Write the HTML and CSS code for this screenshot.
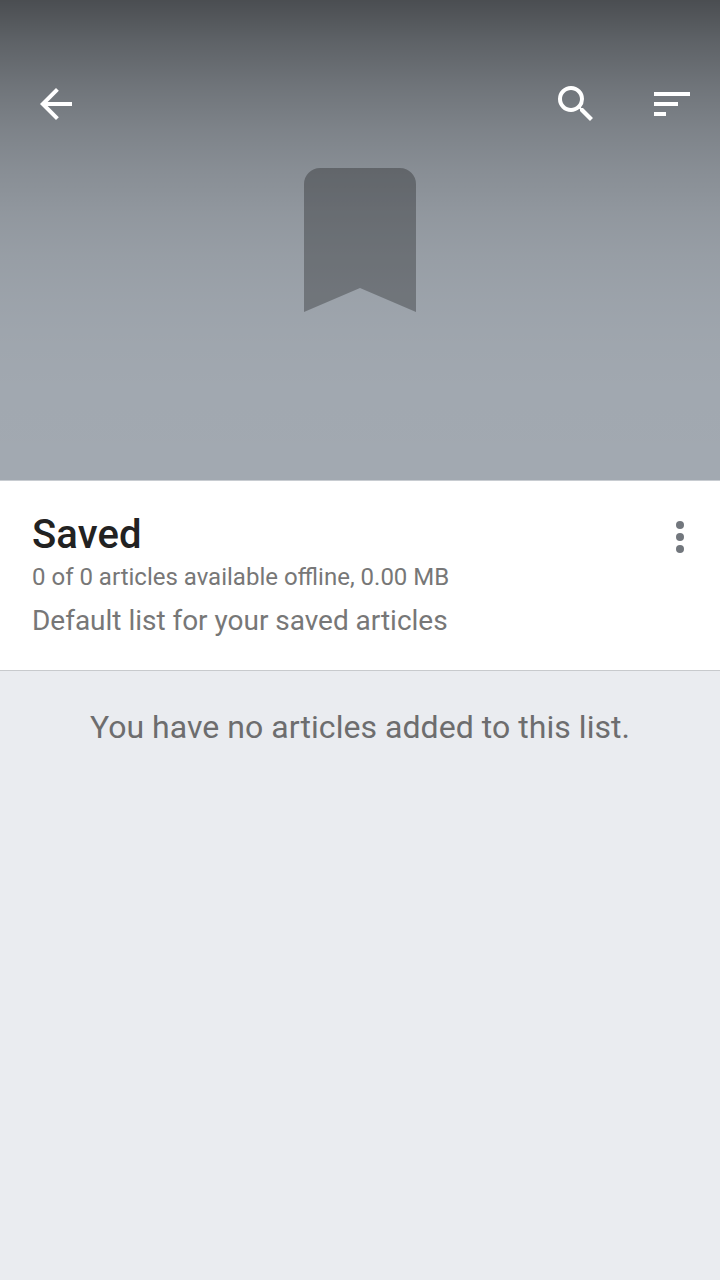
FILE: index.html
```html
<!DOCTYPE html>
<html lang="en">
<head>
<meta charset="utf-8">
<title>Saved</title>
<link rel="stylesheet" href="styles.css">
</head>
<body>
<header class="hero">
  <nav class="toolbar">
    <button class="icon-button" aria-label="Back"><svg viewBox="0 0 24 24"><path d="M20 11H7.83l5.59-5.59L12 4l-8 8 8 8 1.41-1.41L7.83 13H20z"/></svg></button>
    <span class="actions">
      <button class="icon-button" aria-label="Search"><svg viewBox="0 0 24 24"><path d="M15.5 14h-.79l-.28-.27A6.471 6.471 0 0 0 16 9.5 6.5 6.5 0 1 0 9.5 16c1.61 0 3.09-.59 4.23-1.57l.27.28v.79l5 4.99L20.49 19zm-6 0C7.01 14 5 11.99 5 9.5S7.01 5 9.5 5 14 7.01 14 9.5 11.99 14 9.5 14z"/></svg></button>
      <button class="icon-button" aria-label="Sort"><svg viewBox="0 0 24 24"><path d="M3 18h6v-2H3zM3 6v2h18V6zm0 7h12v-2H3z"/></svg></button>
    </span>
  </nav>
  <svg class="bookmark" viewBox="0 0 112 144"><path d="M16 0H96A16 16 0 0 1 112 16V144L56 120L0 144V16A16 16 0 0 1 16 0Z"/></svg>
</header>
<section class="summary">
  <div class="details">
    <h1 class="title">Saved</h1>
    <p class="stats">0 of 0 articles available offline, 0.00 MB</p>
    <p class="description">Default list for your saved articles</p>
  </div>
  <button class="overflow" aria-label="More options"><svg viewBox="0 0 8 32"><circle cx="4" cy="4" r="4"/><circle cx="4" cy="16" r="4"/><circle cx="4" cy="28" r="4"/></svg></button>
</section>
<main class="empty">You have no articles added to this list.</main>
</body>
</html>
```
FILE: styles.css
```css
* { box-sizing: border-box; }
body { margin: 0; min-height: 1280px; background: #eaecf0; font-family: Roboto, sans-serif; }
button { border: 0; padding: 0; background: none; }
svg { display: block; }
.hero {
  height: 480px;
  padding-top: 48px;
  background: linear-gradient(rgba(0,0,0,.54) 0, rgba(0,0,0,.416) 43px, rgba(0,0,0,.3125) 86px, rgba(0,0,0,.228) 129px, rgba(0,0,0,.16) 171px, rgba(0,0,0,.107) 214px, rgba(0,0,0,.0675) 257px, rgba(0,0,0,.039) 300px, rgba(0,0,0,.02) 343px, rgba(0,0,0,.0085) 385px, rgba(0,0,0,.0025) 428px, rgba(0,0,0,0) 480px) #a2a9b1;
}
.toolbar { height: 112px; padding: 0 24px 0 32px; display: flex; align-items: center; justify-content: space-between; }
.icon-button { width: 48px; height: 48px; }
.icon-button svg { width: 48px; height: 48px; fill: #fff; }
.actions { display: flex; gap: 48px; }
.bookmark { width: 112px; height: 144px; margin: 8px auto 0; fill: rgba(0,0,0,.28); }
.summary {
  height: 191px;
  padding: 29px 36px 0 32px;
  display: flex;
  justify-content: space-between;
  align-items: flex-start;
  background: #fff;
  border-top: 1px solid #c8ccd1;
  border-bottom: 1px solid #c8cacd;
}
.title { margin: 0; font-size: 40px; line-height: 50px; font-weight: 500; letter-spacing: .15px; color: #222; }
.stats { margin: 3px 0 0; font-size: 24px; line-height: 28px; color: #777; }
.description { margin: 12px 0 0; font-size: 28px; line-height: 36px; letter-spacing: -.02px; color: #777; }
.overflow { margin-top: 11px; }
.overflow svg { width: 8px; height: 32px; fill: #72777d; }
.empty { padding-top: 36px; text-align: center; font-size: 32px; line-height: 40px; letter-spacing: .05px; color: #6d6d6e; }
```
